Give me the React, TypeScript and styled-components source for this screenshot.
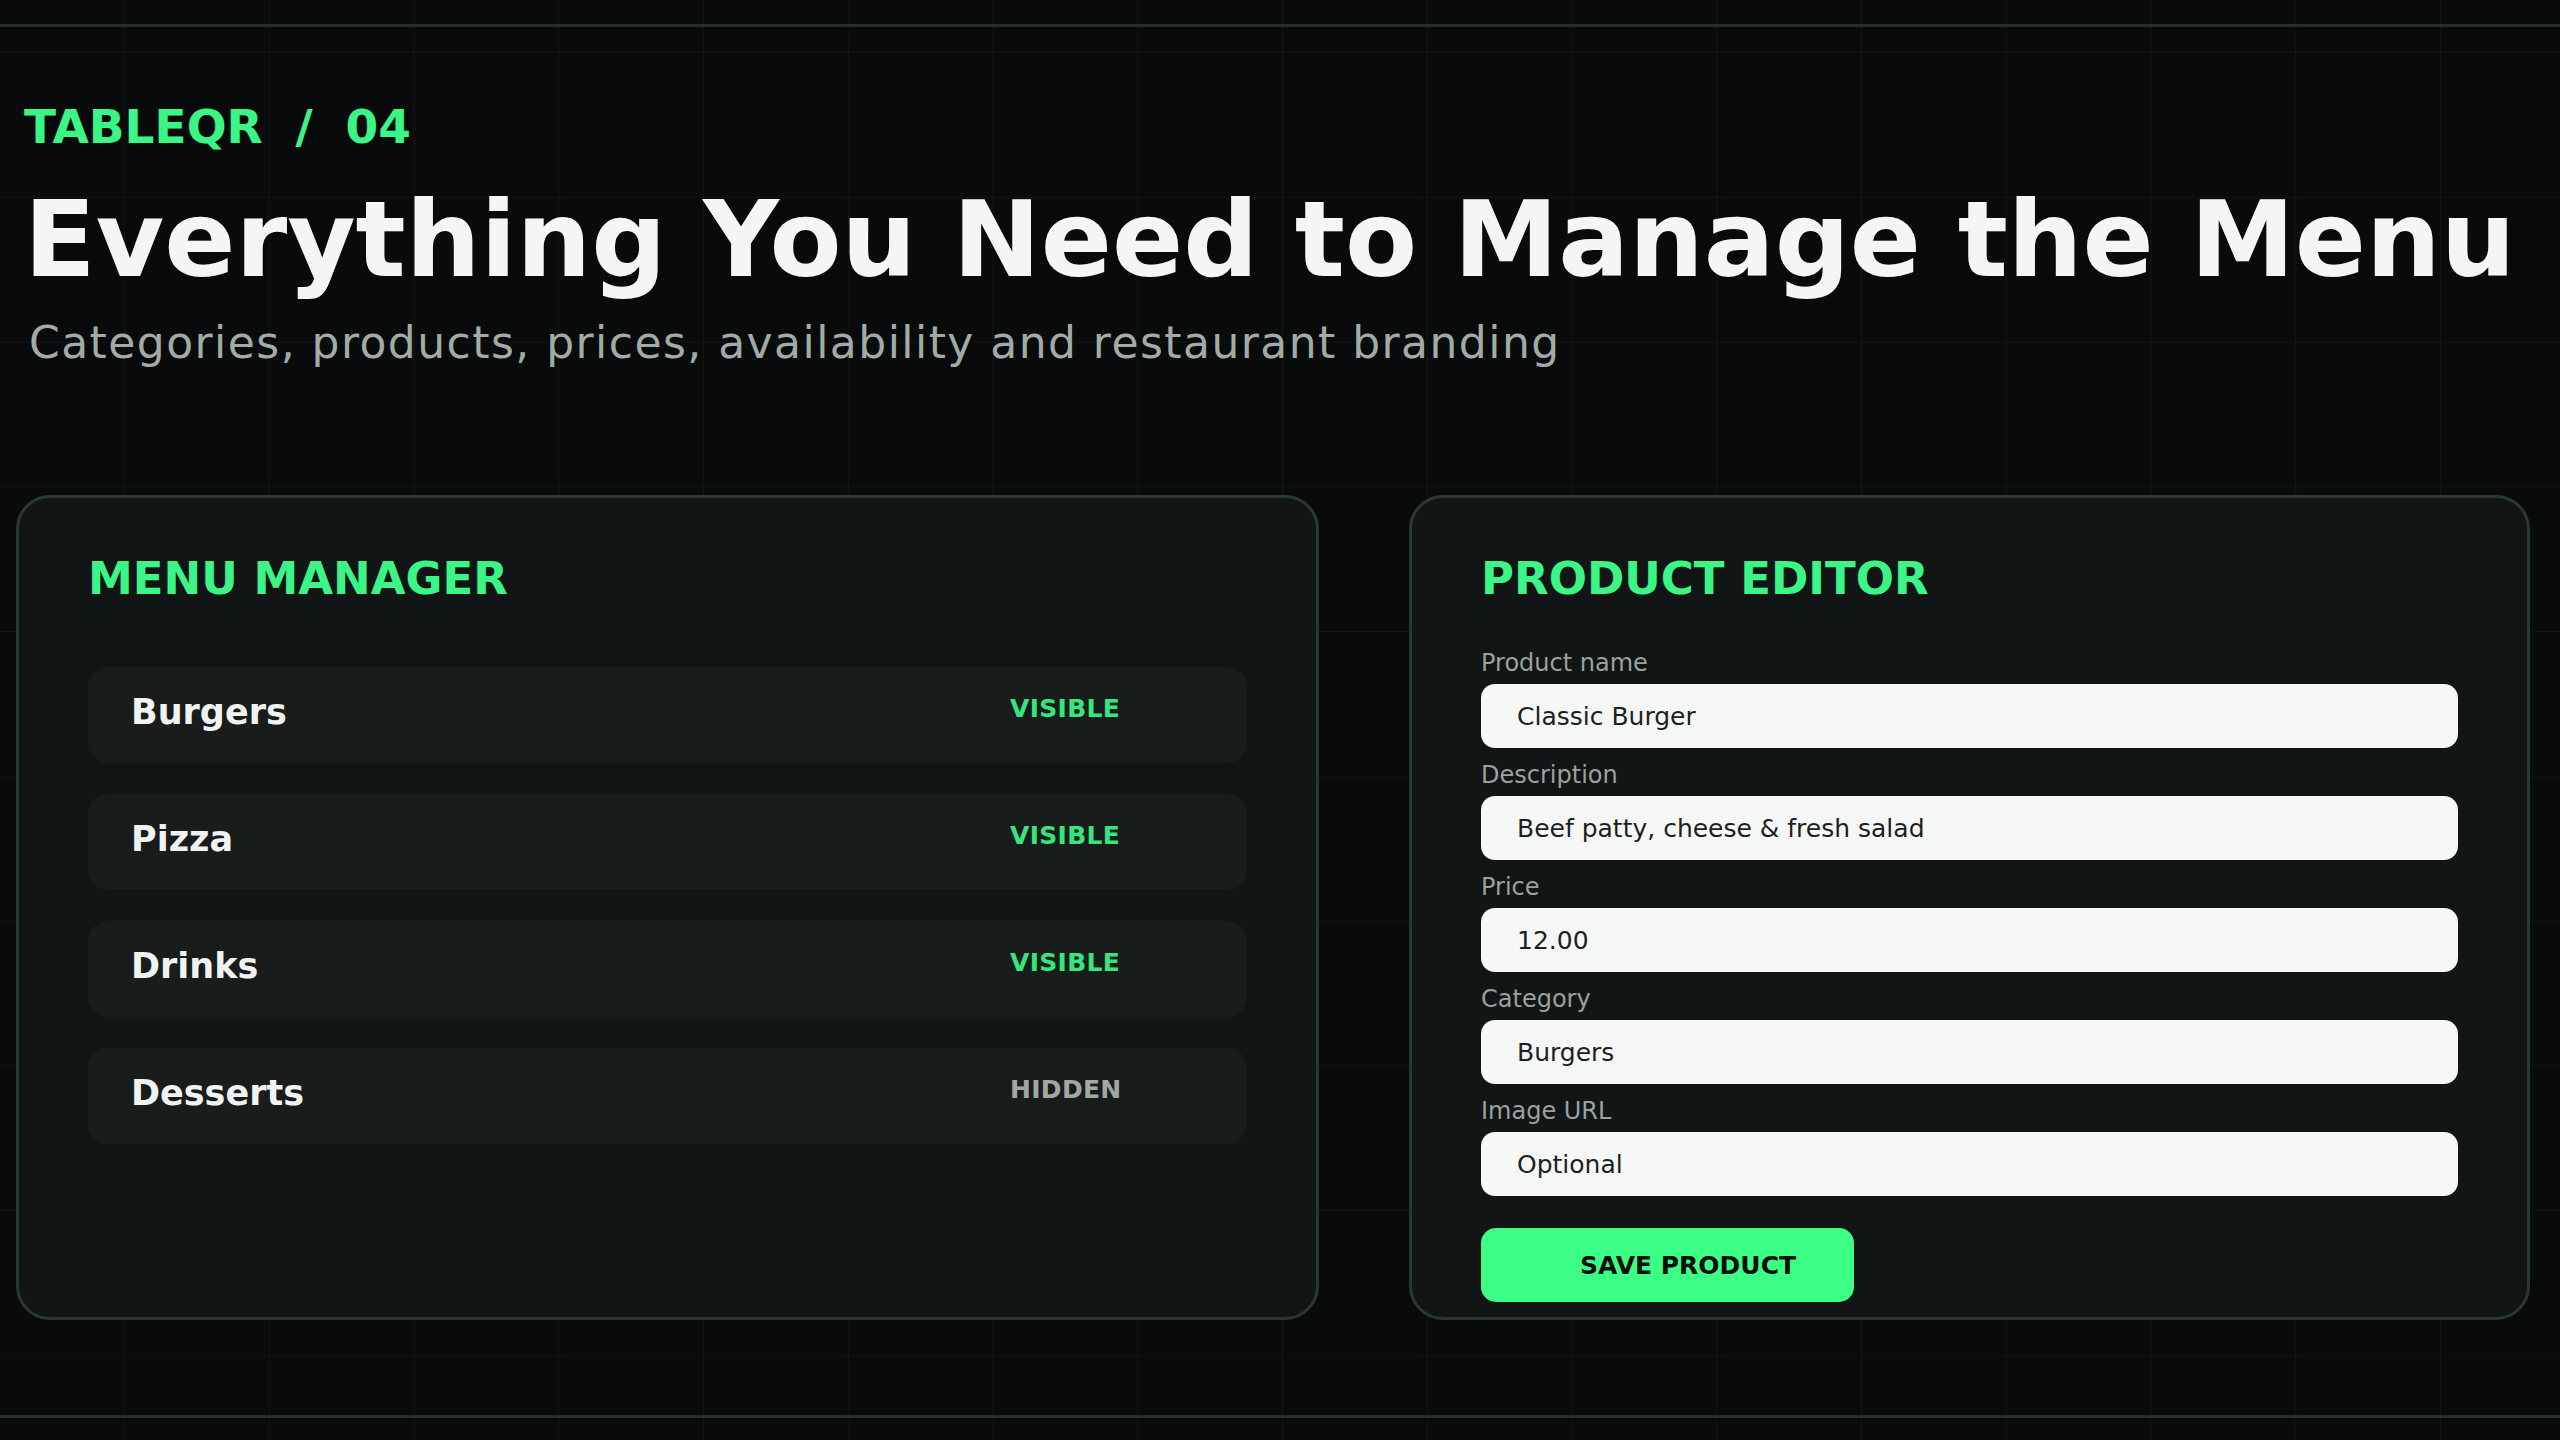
import React from "react";
import styled, { createGlobalStyle } from "styled-components";

const GlobalStyle = createGlobalStyle`
    html, body {
        margin: 0;
        padding: 0;
        height: 1440px;
        overflow: hidden;
    }
    body {
        background-color: #080a0b;
        background-image:
            linear-gradient(to right, rgba(60, 90, 75, 0.14) 1px, transparent 1px),
            linear-gradient(to bottom, rgba(60, 90, 75, 0.14) 1px, transparent 1px);
        background-size: 144.75px 144.75px;
        background-position: 124px 52px;
        font-family: "DejaVu Sans", "Liberation Sans", sans-serif;
        color: #f4f6f5;
    }
    * {
        box-sizing: border-box;
    }
`;

const Frame = styled.div`
    margin-top: 24px;
    height: 1394px;
    border-top: 3px solid #22302a;
    border-bottom: 3px solid #22302a;
`;

const Hero = styled.header`
    padding: 76px 0 0 24px;
`;

const Eyebrow = styled.div`
    font-size: 47px;
    line-height: 1;
    font-weight: 700;
    color: #3cf587;
    white-space: pre;
`;

const Title = styled.h1`
    margin: 38px 0 0;
    font-size: 105px;
    line-height: 1;
    font-weight: 700;
    color: #f4f6f5;
    white-space: nowrap;
`;

const Subtitle = styled.p`
    margin: 28px 0 0 5px;
    font-size: 44px;
    line-height: 1;
    letter-spacing: 1.45px;
    color: #a2aba6;
    white-space: nowrap;
`;

const Panels = styled.main`
    display: grid;
    grid-template-columns: 1303px 1121px;
    gap: 90px;
    padding-left: 16px;
    margin-top: 130px;
`;

const Panel = styled.section`
    height: 825px;
    background: #111516;
    border: 3px solid #263a30;
    border-radius: 34px;
    padding: 58px 69px 0;
`;

const PanelTitle = styled.h2<{ $gap: number }>`
    margin: 0 0 ${(p) => p.$gap}px;
    font-size: 45px;
    line-height: 1;
    font-weight: 700;
    color: #3cf587;
`;

const List = styled.div`
    display: flex;
    flex-direction: column;
    gap: 31px;
`;

const Row = styled.div`
    display: grid;
    grid-template-columns: 1fr 192px;
    align-items: start;
    height: 96px;
    padding: 28px 45px 0 43px;
    background: #181c1b;
    border-radius: 20px;
`;

const RowName = styled.span`
    font-size: 35px;
    line-height: 1;
    font-weight: 700;
    color: #f1f3f2;
`;

const Badge = styled.span<{ $on: boolean }>`
    margin-top: 1px;
    font-size: 25px;
    line-height: 1;
    font-weight: 700;
    letter-spacing: 0.3px;
    color: ${(p) => (p.$on ? "#36e57e" : "#a0a8a4")};
`;

const Form = styled.form`
    display: flex;
    flex-direction: column;
    gap: 15px;
`;

const Field = styled.label`
    display: flex;
    flex-direction: column;
    gap: 9px;
`;

const FieldLabel = styled.span`
    font-size: 24px;
    line-height: 1;
    color: #9aa19e;
`;

const Input = styled.input`
    height: 64px;
    width: 100%;
    border: none;
    outline: none;
    border-radius: 14px;
    background: #f5f7f6;
    padding: 0 0 0 36px;
    font-family: "DejaVu Sans", "Liberation Sans", sans-serif;
    font-size: 25px;
    color: #1c1f1e;
    &::placeholder {
        color: #1c1f1e;
        opacity: 1;
    }
`;

const SaveButton = styled.button`
    margin-top: 17px;
    width: 373px;
    height: 74px;
    border: none;
    border-radius: 15px;
    background: #3cff86;
    padding: 0 0 0 99px;
    text-align: left;
    font-family: "DejaVu Sans", "Liberation Sans", sans-serif;
    font-size: 25px;
    font-weight: 700;
    color: #0b0f0d;
    cursor: pointer;
`;

const categories = [
    { name: "Burgers", visible: true },
    { name: "Pizza", visible: true },
    { name: "Drinks", visible: true },
    { name: "Desserts", visible: false },
];

const fields = [
    { label: "Product name", value: "Classic Burger" },
    { label: "Description", value: "Beef patty, cheese & fresh salad" },
    { label: "Price", value: "12.00" },
    { label: "Category", value: "Burgers" },
    { label: "Image URL", placeholder: "Optional" },
];

const App = () => {
    return (
        <>
            <GlobalStyle />
            <Frame>
                <Hero>
                    <Eyebrow>TABLEQR  /  04</Eyebrow>
                    <Title>Everything You Need to Manage the Menu</Title>
                    <Subtitle>Categories, products, prices, availability and restaurant branding</Subtitle>
                </Hero>
                <Panels>
                    <Panel>
                        <PanelTitle $gap={66}>MENU MANAGER</PanelTitle>
                        <List>
                            {categories.map((c) => (
                                <Row key={c.name}>
                                    <RowName>{c.name}</RowName>
                                    <Badge $on={c.visible}>{c.visible ? "VISIBLE" : "HIDDEN"}</Badge>
                                </Row>
                            ))}
                        </List>
                    </Panel>
                    <Panel>
                        <PanelTitle $gap={50}>PRODUCT EDITOR</PanelTitle>
                        <Form onSubmit={(e) => e.preventDefault()}>
                            {fields.map((f) => (
                                <Field key={f.label}>
                                    <FieldLabel>{f.label}</FieldLabel>
                                    <Input defaultValue={f.value} placeholder={f.placeholder} />
                                </Field>
                            ))}
                            <SaveButton type="submit">SAVE PRODUCT</SaveButton>
                        </Form>
                    </Panel>
                </Panels>
            </Frame>
        </>
    );
};

export default App;
